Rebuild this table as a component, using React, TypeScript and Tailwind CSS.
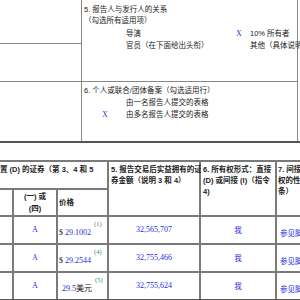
import React from 'react';

const sans = { fontFamily: '"Liberation Sans", "Noto Sans CJK SC", sans-serif' };
const serif = { fontFamily: '"Liberation Serif", "Noto Sans CJK SC", serif' };

interface Row {
  price: React.ReactNode;
  note: string;
  amount: string;
}

const rows: Row[] = [
  { price: <><span className="text-[#222]">$ </span>29.1002</>, note: '(1)', amount: '32,565,707' },
  { price: <><span className="text-[#222]">$ </span>29.2544</>, note: '(4)', amount: '32,755,466' },
  { price: <><span className="pl-[3px]">29.5</span><span className="text-[#222]">美元</span></>, note: '(5)', amount: '32,755,624' },
];

const CheckRow: React.FC<{ mark?: string; label: string; mark2?: string; label2?: string }> = ({
  mark, label, mark2, label2,
}) => (
  <div className="grid grid-cols-[42px_102px_22px_1fr] h-[12px] items-center">
    <span className="text-center text-[#2a2ae0]" style={serif}>{mark}</span>
    <span>{label}</span>
    <span className="text-center text-[#2a2ae0]" style={serif}>{mark2}</span>
    <span className="whitespace-nowrap">{label2}</span>
  </div>
);

export default function App() {
  return (
    <div className="w-[300px] h-[300px] overflow-hidden bg-white text-[#222] text-[7.5px] leading-[11px]" style={sans}>
      <div className="w-[340px]">
        {/* top section */}
        <div className="flex h-[141px]">
          <div className="w-[82px] border-r border-[#888] flex flex-col">
            <div className="h-[44px] border-b border-[#888]" />
            <div className="h-[38px] border-b border-[#888]" />
            <div className="flex-1" />
          </div>
          <div className="w-[216px] border-r border-[#888] flex flex-col">
            <div className="h-[82px] border-b border-[#888] pt-[4px] pl-[2px]">
              <div>5. 报告人与发行人的关系</div>
              <div className="mb-[1px]">（勾选所有适用项）</div>
              <CheckRow label="导演" mark2="X" label2="10% 所有者" />
              <CheckRow label="官员（在下面给出头衔）" label2="其他（具体说明如下）" />
            </div>
            <div className="flex-1 pt-[3px] pl-[2px]">
              <div>6. 个人或联合/团体备案（勾选适用行）</div>
              <CheckRow label="由一名报告人提交的表格" />
              <CheckRow mark="X" label="由多名报告人提交的表格" />
            </div>
          </div>
        </div>
        <div className="h-[2px] bg-[#555]" />
        <div className="h-[17px]" />

        {/* bottom table */}
        <div
          className="grid grid-cols-[12px_42px_49px_90px_74px_60px] grid-rows-[26px_25px_26px_26px_26px] gap-[2px] bg-[#7a7a7a] border-t-[2px] border-b-[2px] border-[#7a7a7a] border-b-[#555] font-bold"
        >
          <div className="col-span-3 bg-white pt-[2px] whitespace-nowrap">置 (D) 的证券（第 3、4 和 5</div>
          <div className="row-span-2 bg-white pt-[2px] pl-[2px] whitespace-nowrap">5. 报告交易后实益拥有的证<br />券金额（说明 3 和 4）</div>
          <div className="row-span-2 bg-white pt-[2px] pl-[2px] whitespace-nowrap">6. 所有权形式：直接<br />(D) 或间接 (I)（指令<br />4)</div>
          <div className="row-span-2 bg-white pt-[2px] pl-[1px] whitespace-nowrap">7. 间接<br />权的性<br />条）</div>

          <div className="bg-white" />
          <div className="bg-white flex flex-col items-center justify-center leading-[12px]">
            <span>(一) 或</span>
            <span>(四)</span>
          </div>
          <div className="bg-white flex items-center pl-[1px]">价格</div>

          {rows.map((r, i) => (
            <React.Fragment key={i}>
              <div className="bg-white" />
              <div className="bg-white flex items-center justify-center pb-[1px] text-[#2a2ae0] font-normal" style={serif}>A</div>
              <div className="bg-white flex pl-[1px] text-[#2a2ae0] font-normal text-[8px]" style={serif}>
                <span className="self-end pb-[5px] whitespace-nowrap">{r.price}</span>
                <span className="self-start mt-[3px] ml-[3px] text-[#3a8a3a] text-[6.5px] leading-[8px]">{r.note}</span>
              </div>
              <div className="bg-white flex items-center justify-center pb-[1px] text-[#2a2ae0] font-normal text-[8px]" style={serif}>{r.amount}</div>
              <div className="bg-white flex items-center justify-center text-[#2a2ae0] font-normal" style={serif}>我</div>
              <div className="bg-white flex items-end pb-[4px] pl-[3px] text-[#2a2ae0] font-normal whitespace-nowrap" style={serif}>参见脚注</div>
            </React.Fragment>
          ))}
        </div>
      </div>
    </div>
  );
}
